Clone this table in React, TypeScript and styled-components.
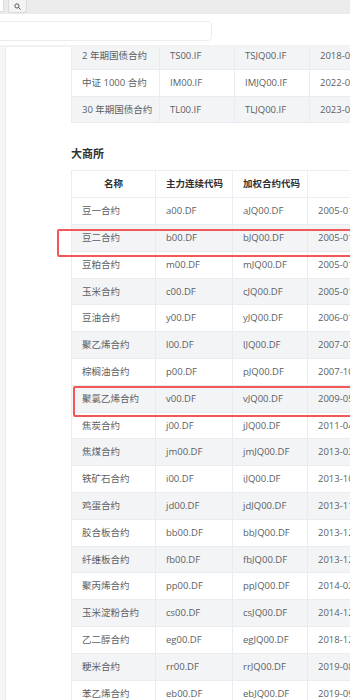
import React from "react";
import styled, { createGlobalStyle } from "styled-components";

const GlobalStyle = createGlobalStyle`
  html, body {
    margin: 0;
    padding: 0;
    background: #f5f6f7;
    overflow: hidden;
  }
  body {
    font-family: "Open Sans", "Noto Sans CJK SC", sans-serif;
    width: 350px;
    height: 700px;
  }
`;

const TopBar = styled.div`
  height: 14px;
  background: #ebebeb;
  display: flex;
  align-items: flex-start;
  gap: 4px;
`;

const InputStub = styled.div`
  width: 3px;
  height: 11px;
  background: #fff;
  border: 1px solid #dcdcdc;
  border-left: none;
  border-top: none;
  border-radius: 0 0 2px 0;
`;

const SearchButton = styled.div`
  width: 17px;
  height: 12px;
  background: #f4f4f4;
  border: 1px solid #dadada;
  border-top: none;
  border-radius: 0 0 3px 3px;
  display: flex;
  align-items: center;
  justify-content: center;
`;

const SearchRow = styled.div`
  background: #fff;
  height: 33px;
  padding-top: 7px;
  box-sizing: border-box;
  border-bottom: 2px solid #f1f2f3;
`;

const SearchInput = styled.div`
  width: 216px;
  height: 20px;
  margin-left: -4px;
  border: 1px solid #ececec;
  border-radius: 4px;
  box-sizing: border-box;
  background: #fff;
`;

const Body = styled.div`
  margin-left: 5px;
  background: #fff;
  border-left: 1px solid #ececec;
  height: 700px;
  overflow: hidden;
`;

const Scroller = styled.div`
  margin-top: -5px;
  padding-left: 65px;
`;

const Heading = styled.h3`
  margin: 23px 0 9px;
  font-size: 11px;
  line-height: 15px;
  font-weight: 700;
  color: #2f3133;
`;

const Table = styled.table`
  border-collapse: collapse;
  table-layout: fixed;
  width: 400px;
  font-size: 9.5px;
  color: #5c5f64;
`;

const Th = styled.th`
  padding: 5px 10px;
  line-height: 15.8px;
  border: 1px solid #ebeef2;
  font-weight: 700;
  color: #2e3034;
  text-align: center;
  white-space: nowrap;
  overflow: hidden;
`;

const Row = styled.tr<{ $striped: boolean }>`
  background: ${(p) => (p.$striped ? "#f3f4f6" : "#fff")};
`;

const Td = styled.td`
  position: relative;
  padding: 5px 10px;
  line-height: 15.8px;
  border: 1px solid #e9ecf0;
  white-space: nowrap;
  overflow: visible;
`;

const Highlight = styled.div<{ $left: number; $top: number; $height: number }>`
  position: absolute;
  left: ${(p) => p.$left}px;
  top: ${(p) => p.$top}px;
  width: 340px;
  height: ${(p) => p.$height}px;
  border: 2px solid #f25858;
  border-radius: 2px;
  box-sizing: border-box;
  pointer-events: none;
  z-index: 2;
`;

type Item = { name: string; main: string; weighted: string; start: string; mark?: "a" | "b" };

const cffex: Item[] = [
  { name: "2 年期国债合约", main: "TS00.IF", weighted: "TSJQ00.IF", start: "2018-08-17" },
  { name: "中证 1000 合约", main: "IM00.IF", weighted: "IMJQ00.IF", start: "2022-07-22" },
  { name: "30 年期国债合约", main: "TL00.IF", weighted: "TLJQ00.IF", start: "2023-04-21" },
];

const dce: Item[] = [
  { name: "豆一合约", main: "a00.DF", weighted: "aJQ00.DF", start: "2005-01-04" },
  { name: "豆二合约", main: "b00.DF", weighted: "bJQ00.DF", start: "2005-01-04", mark: "a" },
  { name: "豆粕合约", main: "m00.DF", weighted: "mJQ00.DF", start: "2005-01-04" },
  { name: "玉米合约", main: "c00.DF", weighted: "cJQ00.DF", start: "2005-01-04" },
  { name: "豆油合约", main: "y00.DF", weighted: "yJQ00.DF", start: "2006-01-09" },
  { name: "聚乙烯合约", main: "l00.DF", weighted: "lJQ00.DF", start: "2007-07-31" },
  { name: "棕榈油合约", main: "p00.DF", weighted: "pJQ00.DF", start: "2007-10-29" },
  { name: "聚氯乙烯合约", main: "v00.DF", weighted: "vJQ00.DF", start: "2009-05-25", mark: "b" },
  { name: "焦炭合约", main: "j00.DF", weighted: "jJQ00.DF", start: "2011-04-15" },
  { name: "焦煤合约", main: "jm00.DF", weighted: "jmJQ00.DF", start: "2013-03-22" },
  { name: "铁矿石合约", main: "i00.DF", weighted: "iJQ00.DF", start: "2013-10-18" },
  { name: "鸡蛋合约", main: "jd00.DF", weighted: "jdJQ00.DF", start: "2013-11-08" },
  { name: "胶合板合约", main: "bb00.DF", weighted: "bbJQ00.DF", start: "2013-12-06" },
  { name: "纤维板合约", main: "fb00.DF", weighted: "fbJQ00.DF", start: "2013-12-06" },
  { name: "聚丙烯合约", main: "pp00.DF", weighted: "ppJQ00.DF", start: "2014-02-28" },
  { name: "玉米淀粉合约", main: "cs00.DF", weighted: "csJQ00.DF", start: "2014-12-19" },
  { name: "乙二醇合约", main: "eg00.DF", weighted: "egJQ00.DF", start: "2018-12-10" },
  { name: "粳米合约", main: "rr00.DF", weighted: "rrJQ00.DF", start: "2019-08-16" },
  { name: "苯乙烯合约", main: "eb00.DF", weighted: "ebJQ00.DF", start: "2019-09-26" },
];

function SearchIcon() {
  return (
    <svg width="7" height="7" viewBox="0 0 10 10" fill="none" stroke="#555" strokeWidth="1.4">
      <circle cx="4.2" cy="4.2" r="3" />
      <line x1="6.4" y1="6.4" x2="9" y2="9" strokeLinecap="round" />
    </svg>
  );
}

function ContractTable({ items, widths, head, firstStriped }: { items: Item[]; widths: number[]; head: boolean; firstStriped: boolean }) {
  return (
    <Table>
      <colgroup>
        {widths.map((w, i) => (
          <col key={i} style={{ width: w }} />
        ))}
      </colgroup>
      {head && (
        <thead>
          <tr>
            <Th>名称</Th>
            <Th>主力连续代码</Th>
            <Th>加权合约代码</Th>
            <Th>开始时间</Th>
          </tr>
        </thead>
      )}
      <tbody>
        {items.map((it, i) => (
          <Row key={it.main} $striped={(i % 2 === 0) === firstStriped}>
            <Td>
              {it.mark === "a" && <Highlight $left={-15} $top={4} $height={28} />}
              {it.mark === "b" && <Highlight $left={1} $top={0} $height={31} />}
              {it.name}
            </Td>
            <Td>{it.main}</Td>
            <Td>{it.weighted}</Td>
            <Td>{it.start}</Td>
          </Row>
        ))}
      </tbody>
    </Table>
  );
}

export default function App() {
  return (
    <>
      <GlobalStyle />
      <TopBar>
        <InputStub />
        <SearchButton>
          <SearchIcon />
        </SearchButton>
      </TopBar>
      <SearchRow>
        <SearchInput />
      </SearchRow>
      <Body>
        <Scroller>
          <ContractTable items={cffex} widths={[88, 75, 75, 162]} head={false} firstStriped={true} />
          <Heading>大商所</Heading>
          <ContractTable items={dce} widths={[84, 77, 75, 164]} head={true} firstStriped={false} />
        </Scroller>
      </Body>
    </>
  );
}
